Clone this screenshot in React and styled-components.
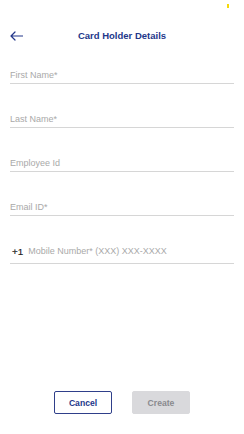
import React from "react";
import styled, { createGlobalStyle } from "styled-components";

const Global = createGlobalStyle`
  html, body { margin: 0; padding: 0; background: #fff; }
  body { font-family: "Liberation Sans", Arial, sans-serif; }
  * { box-sizing: border-box; }
`;

const Page = styled.div`
  width: 244px;
  height: 434px;
  display: flex;
  flex-direction: column;
  background: #fff;
`;

const StatusBar = styled.div`
  height: 24px;
  display: flex;
  justify-content: flex-end;
  padding: 4px 15px 0 0;
`;

const StatusDot = styled.span`
  width: 2px;
  height: 4px;
  background: #f5d90a;
  display: block;
`;

const Header = styled.div`
  height: 22px;
  position: relative;
  display: flex;
  align-items: center;
  justify-content: center;
`;

const BackButton = styled.button`
  position: absolute;
  left: 10px;
  top: 6px;
  width: 14px;
  height: 12px;
  padding: 0;
  border: none;
  background: none;
  display: flex;
  align-items: center;
  color: #23378a;
`;

const Title = styled.h1`
  margin: 0;
  font-size: 9.5px;
  font-weight: 700;
  color: #23378a;
`;

const Form = styled.div`
  display: flex;
  flex-direction: column;
  gap: 30px;
  padding: 24px 10px 0;
`;

const Field = styled.div`
  display: flex;
  align-items: center;
  gap: 5px;
  height: ${(p) => (p.$tall ? "18px" : "14px")};
  padding-bottom: ${(p) => (p.$tall ? "6px" : "2px")};
  padding-left: ${(p) => (p.$tall ? "2px" : "0")};
  border-bottom: 1px solid #d6d6d6;
`;

const Label = styled.span`
  font-size: 9px;
  line-height: 11px;
  color: #a9a9a9;
  white-space: nowrap;
`;

const Prefix = styled.span`
  font-size: 9.8px;
  line-height: 11px;
  color: #222;
  -webkit-text-stroke: 0.2px #222;
`;

const Spacer = styled.div`
  flex: 1;
`;

const Actions = styled.div`
  display: flex;
  justify-content: center;
  gap: 20px;
  padding-bottom: 20px;
`;

const Button = styled.button`
  width: 58px;
  height: 23px;
  border-radius: 2px;
  font-family: inherit;
  font-size: 8.6px;
  font-weight: 700;
  padding: 0;
  border: 1px solid ${(p) => (p.$primary ? "#d9d9dc" : "#2f3f8a")};
  background: ${(p) => (p.$primary ? "#d9d9dc" : "#fff")};
  color: ${(p) => (p.$primary ? "#8a8a8e" : "#23378a")};
`;

export default function App() {
  return (
    <Page>
      <Global />
      <StatusBar>
        <StatusDot />
      </StatusBar>
      <Header>
        <BackButton aria-label="Back">
          <svg width="13" height="10" viewBox="0 0 13 10" fill="none">
            <path d="M12.5 5H1M5 1L1 5l4 4" stroke="#23378a" strokeWidth="1.2" strokeLinecap="round" strokeLinejoin="round" />
          </svg>
        </BackButton>
        <Title>Card Holder Details</Title>
      </Header>
      <Form>
        <Field><Label>First Name*</Label></Field>
        <Field><Label>Last Name*</Label></Field>
        <Field><Label>Employee Id</Label></Field>
        <Field><Label>Email ID*</Label></Field>
        <Field $tall>
          <Prefix>+1</Prefix>
          <Label>Mobile Number* (XXX) XXX-XXXX</Label>
        </Field>
      </Form>
      <Spacer />
      <Actions>
        <Button>Cancel</Button>
        <Button $primary disabled>Create</Button>
      </Actions>
    </Page>
  );
}
